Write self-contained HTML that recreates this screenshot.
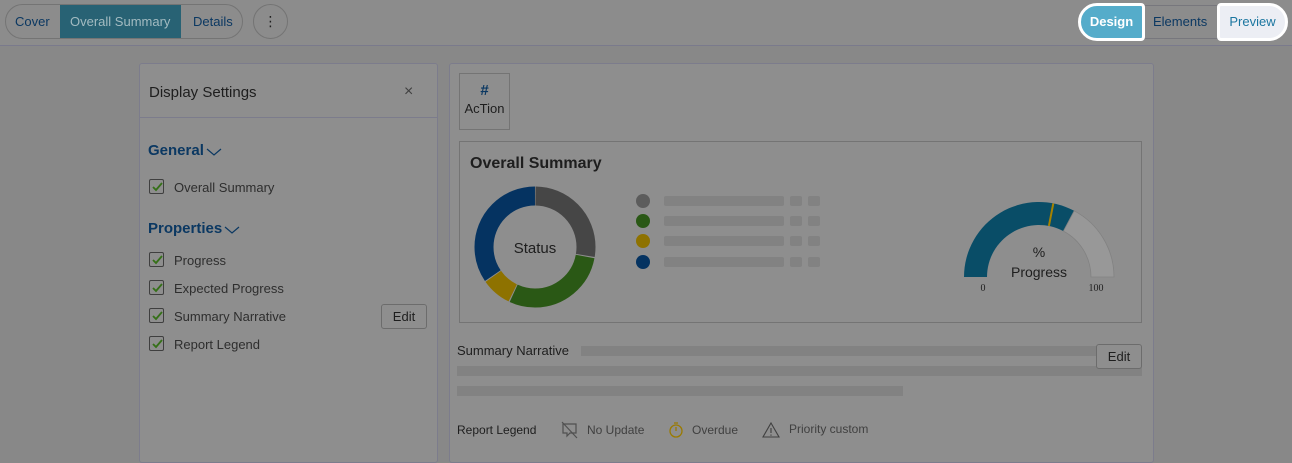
<!DOCTYPE html>
<html><head><meta charset="utf-8"><style>
*{box-sizing:border-box;margin:0;padding:0}
body{width:1292px;height:451px;overflow:hidden;background:#888;font-family:"Liberation Sans","DejaVu Sans",sans-serif;color:#1e1e1e;position:relative}
.a{position:absolute}
.bar{position:absolute;background:#828282;border-radius:2px}
.cb{position:absolute;width:15px;height:15px;border:1px solid #3f3f3f;border-radius:2px}
.cb svg{position:absolute;left:1px;top:1px}
.lbl{position:absolute;font-size:13px;color:#2e2e2e}
</style></head><body>
<div class="a" style="left:0;top:0;width:1292px;height:46px;background:#8c8c8c;border-bottom:1px solid #7a7a8c"></div>
<div class="a" style="left:5px;top:4px;width:238px;height:35px;border:1px solid #747474;border-radius:18px;overflow:hidden">
 <div class="a" style="left:54px;top:0;width:121px;height:35px;background:#286274"></div>
 <div class="a" style="left:9px;top:9px;font-size:13px;color:#0b3862">Cover</div>
 <div class="a" style="left:64px;top:9px;font-size:13px;color:#a3bbc1">Overall Summary</div>
 <div class="a" style="left:187px;top:9px;font-size:13px;color:#0b3862">Details</div>
</div>
<div class="a" style="left:253px;top:4px;width:35px;height:35px;border:1px solid #747474;border-radius:50%;text-align:center;font-size:14px;line-height:33px;color:#1e1e1e">⋮</div>
<div class="a" style="left:1144px;top:5px;width:74px;height:34px;border-top:1px solid #77777d;border-bottom:1px solid #77777d"></div>
<div class="a" style="left:1078px;top:3px;width:67px;height:38px;border:3px solid #fff;border-radius:19px 4px 4px 19px;background:#55acca;color:#fff;font-size:13px;font-weight:bold;text-align:center;line-height:32px">Design</div>
<div class="a" style="left:1153px;top:14px;font-size:13px;color:#0b3862">Elements</div>
<div class="a" style="left:1217px;top:3px;width:71px;height:38px;border:3px solid #fff;border-radius:4px 19px 19px 4px;background:#eceef4;color:#1b76a0;font-size:13px;text-align:center;line-height:32px">Preview</div>

<div class="a" style="left:139px;top:63px;width:299px;height:400px;background:#8e8e8e;border:1px solid #7c7c8c;border-radius:3px"></div>
<div class="a" style="left:149px;top:84px;font-size:15px;color:#1e1e1e">Display Settings</div>
<div class="a" style="left:404px;top:83px;font-size:16px;color:#404040">×</div>
<div class="a" style="left:140px;top:117px;width:297px;height:1px;background:#7c7c8c"></div>
<div class="a" style="left:148px;top:142px;font-size:15px;font-weight:bold;color:#0b3862">General</div>
<svg class="a" style="left:206px;top:147px" width="16" height="10"><path d="M1 2l7 6 7-6" fill="none" stroke="#0b3862" stroke-width="1.2"/></svg>
<div class="cb" style="left:149px;top:179px"><svg width="12" height="12"><path d="M2 6l3 3 6-7" stroke="#357018" stroke-width="1.8" fill="none"/></svg></div>
<div class="lbl" style="left:174px;top:180px">Overall Summary</div>
<div class="a" style="left:148px;top:220px;font-size:15px;font-weight:bold;color:#0b3862">Properties</div>
<svg class="a" style="left:224px;top:225px" width="16" height="10"><path d="M1 2l7 6 7-6" fill="none" stroke="#0b3862" stroke-width="1.2"/></svg>
<div class="cb" style="left:149px;top:252px"><svg width="12" height="12"><path d="M2 6l3 3 6-7" stroke="#357018" stroke-width="1.8" fill="none"/></svg></div>
<div class="lbl" style="left:174px;top:253px">Progress</div>
<div class="cb" style="left:149px;top:280px"><svg width="12" height="12"><path d="M2 6l3 3 6-7" stroke="#357018" stroke-width="1.8" fill="none"/></svg></div>
<div class="lbl" style="left:174px;top:281px">Expected Progress</div>
<div class="cb" style="left:149px;top:308px"><svg width="12" height="12"><path d="M2 6l3 3 6-7" stroke="#357018" stroke-width="1.8" fill="none"/></svg></div>
<div class="lbl" style="left:174px;top:309px">Summary Narrative</div>
<div class="cb" style="left:149px;top:336px"><svg width="12" height="12"><path d="M2 6l3 3 6-7" stroke="#357018" stroke-width="1.8" fill="none"/></svg></div>
<div class="lbl" style="left:174px;top:337px">Report Legend</div>
<div class="a" style="left:381px;top:304px;width:46px;height:25px;border:1px solid #6c6c6c;border-radius:3px;font-size:13px;text-align:center;line-height:23px;color:#1e1e1e">Edit</div>

<div class="a" style="left:449px;top:63px;width:705px;height:400px;background:#8e8e8e;border:1px solid #7c7c8c;border-radius:3px"></div>
<div class="a" style="left:459px;top:73px;width:51px;height:57px;border:1px solid #747474;text-align:center">
 <div style="font-size:15px;font-weight:bold;color:#0b3862;margin-top:8px">#</div>
 <div style="font-size:13px;color:#1e1e1e;margin-top:2px">AcTion</div>
</div>
<div class="a" style="left:459px;top:141px;width:683px;height:182px;border:1px solid #747474"></div>
<div class="a" style="left:470px;top:155px;font-size:16px;font-weight:bold;color:#1e1e1e">Overall Summary</div>
<svg class="a" style="left:0;top:0" width="1292" height="451">
 <g transform="rotate(-90 535 247)" fill="none" stroke-width="19">
  <circle cx="535" cy="247" r="51" stroke="#464646" stroke-dasharray="88 400" stroke-dashoffset="-0.5"/>
  <circle cx="535" cy="247" r="51" stroke="#2a5815" stroke-dasharray="92.5 400" stroke-dashoffset="-89.5"/>
  <circle cx="535" cy="247" r="51" stroke="#8e7200" stroke-dasharray="25.7 400" stroke-dashoffset="-183"/>
  <circle cx="535" cy="247" r="51" stroke="#053361" stroke-dasharray="110.3 400" stroke-dashoffset="-209.6"/>
 </g>
 <text x="535" y="253" font-size="15" text-anchor="middle" fill="#1e1e1e" font-family="Liberation Sans, sans-serif">Status</text>
 <circle cx="643" cy="201" r="7" fill="#5c5c5c"/>
 <circle cx="643" cy="221" r="7" fill="#2a5815"/>
 <circle cx="643" cy="241" r="7" fill="#8e7200"/>
 <circle cx="643" cy="262" r="7" fill="#053361"/>
 <path d="M964 277 A75 75 0 0 1 1074.2 210.8 L1063.4 231.1 A52 52 0 0 0 987 277 Z" fill="#094d67"/>
 <path d="M1074.2 210.8 A75 75 0 0 1 1114 277 L1091 277 A52 52 0 0 0 1063.4 231.1 Z" fill="#989898" stroke="#828282" stroke-width="0.8"/>
 <line x1="1053.3" y1="203.4" x2="1048.9" y2="225.9" stroke="#a68200" stroke-width="2"/>
 <text x="1039" y="257" font-size="14" text-anchor="middle" fill="#1e1e1e" font-family="Liberation Sans, sans-serif">%</text>
 <text x="1039" y="277" font-size="14" text-anchor="middle" fill="#1e1e1e" font-family="Liberation Sans, sans-serif">Progress</text>
 <text x="983" y="291" font-size="10" text-anchor="middle" fill="#1e1e1e" font-family="Liberation Serif, serif">0</text>
 <text x="1096" y="291" font-size="10" text-anchor="middle" fill="#1e1e1e" font-family="Liberation Serif, serif">100</text>
</svg>
<div class="bar" style="left:664px;top:196px;width:120px;height:10px"></div><div class="bar" style="left:790px;top:196px;width:12px;height:10px"></div><div class="bar" style="left:808px;top:196px;width:12px;height:10px"></div>
<div class="bar" style="left:664px;top:216px;width:120px;height:10px"></div><div class="bar" style="left:790px;top:216px;width:12px;height:10px"></div><div class="bar" style="left:808px;top:216px;width:12px;height:10px"></div>
<div class="bar" style="left:664px;top:236px;width:120px;height:10px"></div><div class="bar" style="left:790px;top:236px;width:12px;height:10px"></div><div class="bar" style="left:808px;top:236px;width:12px;height:10px"></div>
<div class="bar" style="left:664px;top:257px;width:120px;height:10px"></div><div class="bar" style="left:790px;top:257px;width:12px;height:10px"></div><div class="bar" style="left:808px;top:257px;width:12px;height:10px"></div>

<div class="lbl" style="left:457px;top:343px;color:#1e1e1e">Summary Narrative</div>
<div class="bar" style="left:581px;top:346px;width:520px;height:10px;border-radius:0"></div>
<div class="bar" style="left:457px;top:366px;width:685px;height:10px;border-radius:0"></div>
<div class="bar" style="left:457px;top:386px;width:446px;height:10px;border-radius:0"></div>
<div class="a" style="left:1096px;top:344px;width:46px;height:25px;border:1px solid #6c6c6c;border-radius:3px;background:#8e8e8e;font-size:13px;text-align:center;line-height:23px;color:#1e1e1e">Edit</div>

<div class="lbl" style="left:457px;top:423px;color:#1e1e1e;font-size:12px">Report Legend</div>
<svg class="a" style="left:561px;top:421px" width="18" height="18"><path d="M2 3h13v9H9l-3 3v-3H2z" fill="none" stroke="#505050" stroke-width="1.2"/><path d="M1 1l15 16" stroke="#505050" stroke-width="1.2"/></svg>
<div class="lbl" style="left:587px;top:423px;color:#404040;font-size:12px">No Update</div>
<svg class="a" style="left:668px;top:421px" width="16" height="18"><circle cx="8" cy="10" r="6" fill="none" stroke="#9a7a00" stroke-width="1.3"/><path d="M8 10V6M6 2h4" stroke="#9a7a00" stroke-width="1.3"/></svg>
<div class="lbl" style="left:692px;top:423px;color:#404040;font-size:12px">Overdue</div>
<svg class="a" style="left:762px;top:421px" width="18" height="18"><path d="M9 2L17 16H1Z" fill="none" stroke="#404040" stroke-width="1.1"/><path d="M9 7v5M9 13.5v1.2" stroke="#404040" stroke-width="1.1"/></svg>
<div class="lbl" style="left:789px;top:422px;color:#404040;font-size:12px">Priority custom</div>
</body></html>
